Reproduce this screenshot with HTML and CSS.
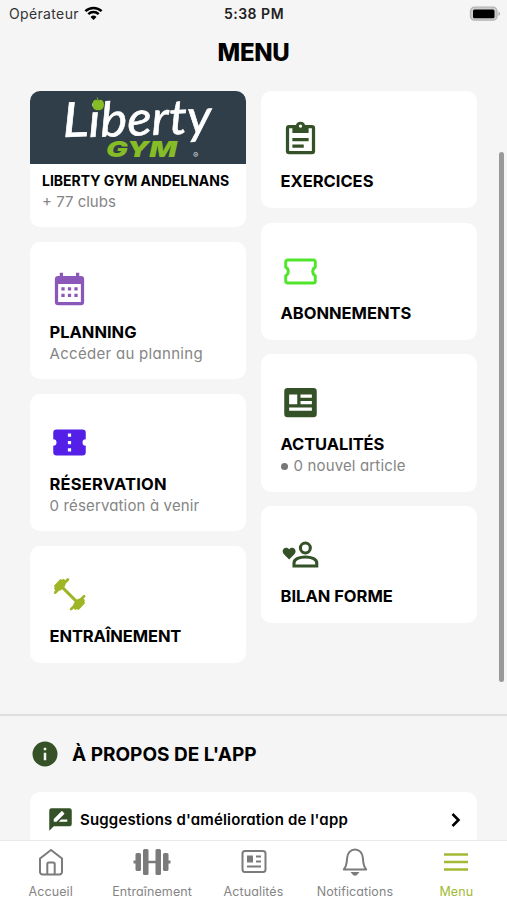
FILE: index.html
```html
<!DOCTYPE html>
<html lang="fr">
<head>
<meta charset="utf-8">
<title>Menu</title>
<link rel="stylesheet" href="styles.css">
</head>
<body>
<div class="app">
  <header class="status">
    <div class="carrier"><span>Opérateur</span>
      <svg width="19" height="15" viewBox="0 0 19 15"><path d="M1.4 5.2a11.6 11.6 0 0 1 16.2 0M4.3 8.2a7.4 7.4 0 0 1 10.4 0" fill="none" stroke="#000" stroke-width="2.5"/><path d="M9.5 14 6.5 11a4.3 4.3 0 0 1 6 0z"/></svg>
    </div>
    <div class="clock">5:38 PM</div>
    <div class="power"><svg width="32" height="16" viewBox="0 0 32 16"><rect x="1.500" y="1.200" width="26.500" height="13" rx="4" fill="#ccc" stroke="#b4b4b4" stroke-width="1.300"/><rect x="4" y="3.400" width="21.500" height="8.800" rx="1.500"/><path d="M29.500 5.500q3 2 0 4.500z" fill="#aaa"/></svg></div>
  </header>
  <h1 class="page-title">MENU</h1>
  <main class="content">
    <div class="columns">
      <div class="column">
        <section class="card club">
          <div class="banner">
            <svg width="216" height="73" viewBox="0 0 216 73">
              <g class="logo-script" transform="rotate(-2 33 46)">
                <text x="33" y="46" textLength="26" lengthAdjust="spacingAndGlyphs">L</text>
                <text x="59" y="47" textLength="123" lengthAdjust="spacingAndGlyphs">iberty</text>
              </g>
              <text class="logo-gym" x="76" y="66" textLength="71" lengthAdjust="spacingAndGlyphs">GYM</text>
              <path d="M68 9.500c-4-2-5.500 1-5.500 4 0 4 3 6.500 5.500 5.500 3 1 6-1.500 6-5.500 0-3-2-6-6-4z" fill="#86bc25"/><path d="M68 10q0-2-1-3.500" stroke="#86bc25" fill="none"/>
              <text class="logo-mark" x="163" y="67">®</text>
            </svg>
          </div>
          <h2 class="club-name">LIBERTY GYM ANDELNANS</h2>
          <p class="sub">+ 77 clubs</p>
        </section>
        <section class="card tile tall">
          <svg class="icon purple" viewBox="0 0 24 24"><path fill-rule="evenodd" d="M19 3h-1V1h-2v2H8V1H6v2H5a2 2 0 0 0-2 2v14a2 2 0 0 0 2 2h14a2 2 0 0 0 2-2V5a2 2 0 0 0-2-2zm0 16H5V8h14z"/><path d="M7 10h2v2H7zm4 0h2v2h-2zm4 0h2v2h-2zM7 14h2v2H7zm4 0h2v2h-2zm4 0h2v2h-2z"/></svg>
          <h2>PLANNING</h2>
          <p class="sub wide">Accéder au planning</p>
        </section>
        <section class="card tile tall">
          <svg class="icon indigo" viewBox="0 0 24 24"><path d="M22 10V6a2 2 0 0 0-2-2H4a2 2 0 0 0-2 2v4a2 2 0 0 1 0 4v4a2 2 0 0 0 2 2h16a2 2 0 0 0 2-2v-4a2 2 0 0 1 0-4zm-9 7.500h-2v-2h2zm0-4.500h-2v-2h2zm0-4.500h-2v-2h2z"/></svg>
          <h2 class="open">RÉSERVATION</h2>
          <p class="sub">0 réservation à venir</p>
        </section>
        <section class="card tile">
          <svg class="icon lime" viewBox="0 0 24 24"><g fill="none" stroke="#9fb526" stroke-linecap="round"><path d="M7 7l10 10" stroke-width="1.900"/><path d="M3.200 10.800l7.800-8M13 21l8-8" stroke-width="1.700"/><path d="M4 8.200l4.200-4.200M15.800 20l4.200-4.200" stroke-width="2.800"/><path d="M3.300 6.800l3.300-3.500M17.400 20.700l3.300-3.500" stroke-width="1.500"/><path d="M6 8l2-2M16 18l2-2" stroke-width="3"/></g></svg>
          <h2 class="tight">ENTRAÎNEMENT</h2>
        </section>
      </div>
      <div class="column">
        <section class="card tile">
          <svg class="icon green" viewBox="0 0 24 24"><path fill-rule="evenodd" d="M7 15h7v2H7zm0-4h10v2H7zM19 3h-4.180a3 3 0 0 0-5.640 0H5a2 2 0 0 0-2 2v14a2 2 0 0 0 2 2h14a2 2 0 0 0 2-2V5a2 2 0 0 0-2-2zm-7-.250a1 1 0 1 1 0 2 1 1 0 0 1 0-2zM19 19H5V5h2v3h10V5h2z"/></svg>
          <h2>EXERCICES</h2>
        </section>
        <section class="card tile">
          <svg class="icon" viewBox="0 0 24 24"><path fill="none" stroke="#50e52b" stroke-width="1.800" stroke-linejoin="round" d="M4 4.900h16a1.100 1.100 0 0 1 1.100 1.100v3.300a3.100 3.100 0 0 0 0 5.400V18a1.100 1.100 0 0 1-1.100 1.100H4A1.100 1.100 0 0 1 2.900 18v-3.300a3.100 3.100 0 0 0 0-5.400V6A1.100 1.100 0 0 1 4 4.900z"/></svg>
          <h2>ABONNEMENTS</h2>
        </section>
        <section class="card tile tall">
          <svg class="icon green" viewBox="0 0 24 24"><path fill-rule="evenodd" d="M20 3H4a2 2 0 0 0-2 2v14a2 2 0 0 0 2 2h16a2 2 0 0 0 2-2V5a2 2 0 0 0-2-2zM5 7h5v6H5zm14 10H5v-2h14zm0-4h-7v-2h7zm0-4h-7V7h7z"/></svg>
          <h2 class="tight">ACTUALITÉS</h2>
          <p class="sub"><i class="dot"></i>0 nouvel article</p>
        </section>
        <section class="card tile">
          <svg class="icon green" viewBox="0 0 24 24"><path d="M5 16.800 1.800 13.600C-.2 11.400 2 8.700 4.300 9.900l.7.600.7-.6c2.300-1.200 4.500 1.500 2.500 3.700z" transform="translate(0 -1.700)"/><g fill="none" stroke="#355128" stroke-width="1.900"><circle cx="15" cy="8" r="3.050"/><path d="M8 19.050v-1.800c0-5 14-5 14 0v1.800z"/></g></svg>
          <h2>BILAN FORME</h2>
        </section>
      </div>
    </div>
    <section class="about">
      <div class="about-head">
        <svg width="30" height="30" viewBox="0 0 24 24" fill="#355128"><path fill-rule="evenodd" d="M12 2a10 10 0 1 0 0 20 10 10 0 0 0 0-20zm1 15h-2v-6h2zm0-8h-2V7h2z"/></svg>
        <h2>À PROPOS DE L'APP</h2>
      </div>
      <div class="row">
        <svg width="27" height="27" viewBox="0 0 24 24"><path fill="#355128" d="M20 2H4a2 2 0 0 0-2 2v18l4-4h14a2 2 0 0 0 2-2V4a2 2 0 0 0-2-2z"/><path fill="#fff" d="M6 14v-2.470l6.880-6.880a.5.500 0 0 1 .7 0l1.770 1.770a.5.500 0 0 1 0 .7L8.470 14zM18 14h-7.500l2-2H18z"/></svg>
        <span class="row-label">Suggestions d'amélioration de l'app</span>
        <svg class="chevron" width="12" height="18" viewBox="0 0 12 18"><path d="M2.500 3l6 6-6 6" fill="none" stroke="#000" stroke-width="2.600"/></svg>
      </div>
    </section>
    <i class="scroll-thumb"></i>
  </main>
  <nav class="tabs">
    <a class="tab"><svg width="32" height="32" viewBox="0 0 32 32"><path d="M5 12.500 16 4l11 8.500V26a2.500 2.500 0 0 1-2.500 2.500h-17A2.500 2.500 0 0 1 5 26zM12.300 28V18a1.500 1.500 0 0 1 1.500-1.500h4.400a1.500 1.500 0 0 1 1.500 1.500v10"/></svg><span>Accueil</span></a>
    <a class="tab"><svg width="40" height="32" viewBox="0 0 40 32"><g fill="#7b7b7b" stroke="none"><rect x="11" y="3" width="5.500" height="26" rx="1.500"/><rect x="23.500" y="3" width="5.500" height="26" rx="1.500"/><rect x="3.500" y="7" width="5.500" height="18" rx="1.500"/><rect x="31" y="7" width="5.500" height="18" rx="1.500"/><path d="M15 14.700h10v2.600H15zM1.500 14.500h4v3h-4zM34.500 14.500h4v3h-4z"/></g></svg><span>Entraînement</span></a>
    <a class="tab"><svg width="32" height="32" viewBox="0 0 32 32"><rect x="4.500" y="5" width="23" height="21" rx="2.500"/><path d="M9 20.500h14M18 10.500h5M18 15.500h5"/><path d="M9 9.500h6v7H9z" fill="#7b7b7b" stroke="none"/></svg><span>Actualités</span></a>
    <a class="tab"><svg width="32" height="32" viewBox="0 0 32 32"><path d="M4.800 23.500c3-3.500 3-7 3.300-11.500.3-5 3.500-8.500 7.900-8.500s7.600 3.500 7.900 8.500c.3 4.500.3 8 3.300 11.500z" stroke-linejoin="round"/><path d="M13.500 27q2.500 3.500 5 0z" fill="#7b7b7b"/></svg><span>Notifications</span></a>
    <a class="tab active"><svg width="32" height="32" viewBox="0 0 32 32"><path d="M4 8.500h24M4 16h24M4 23.500h24"/></svg><span>Menu</span></a>
  </nav>
</div>
</body>
</html>
```
FILE: styles.css
```css
* { box-sizing: border-box; margin: 0; padding: 0; }
body { font-family: Inter, "Liberation Sans", sans-serif; font-feature-settings: "cv11"; background: #f5f5f5; color: #000; }
svg { display: block; flex: none; }
.app { height: 900px; display: flex; flex-direction: column; overflow: hidden; }
.status { height: 27px; display: grid; grid-template-columns: 1fr auto 1fr; align-items: center; padding: 0 6px 0 9px; font-size: 14px; font-feature-settings: normal; flex: none; }
.carrier { display: flex; gap: 5px; align-items: center; color: #333; letter-spacing: .35px; }
.clock { font-weight: 600; color: #222; letter-spacing: .5px; position: relative; left: -1px; }
.power { display: flex; justify-content: flex-end; }
.page-title { height: 50px; line-height: 51px; text-align: center; font-size: 24px; font-weight: 800; letter-spacing: -.3px; flex: none; }
.content { flex: 1; min-height: 0; overflow: hidden; position: relative; padding-top: 14px; }
.columns { display: flex; gap: 15px; padding: 0 30px; height: 623px; align-items: flex-start; }
.column { flex: 1; display: flex; flex-direction: column; gap: 14.600px; }
.card { background: #fff; border-radius: 10px; }
.club { height: 136px; }
.banner { height: 73px; background: #2f3e49; border-radius: 10px 10px 0 0; }
.banner svg { overflow: visible; }
.logo-script { font: italic 400 48px Lato, sans-serif; fill: #fff; stroke: #fff; stroke-width: .6; }
.logo-gym { font: italic 900 22px Inter, sans-serif; fill: #86bc25; }
.logo-mark { font-size: 8px; fill: #ddd; }
.club-name { font-size: 14px; line-height: 20px; padding: 7px 0 0 12px; font-weight: 700; white-space: nowrap; }
.club .sub { padding: 1px 0 0 12px; letter-spacing: 0; }
.tile { height: 117px; padding: 29px 0 0 19.500px; }
.tile.tall { height: 137.500px; }
.icon { width: 39px; height: 39px; fill: #355128; }
.icon.purple { fill: #8b57b8; }
.icon.indigo { fill: #5420e8; }
.tile h2 { font-size: 16.500px; line-height: 24px; margin-top: 10px; font-weight: 700; }
.tile h2.tight { letter-spacing: -.1px; }
.tile h2.open { letter-spacing: .2px; }
.sub { font-size: 15px; line-height: 20px; color: #858585; white-space: nowrap; letter-spacing: .15px; }
.sub.wide { letter-spacing: .3px; }
.dot { display: inline-block; width: 7px; height: 7px; border-radius: 50%; background: #777; margin-right: 6px; vertical-align: 1px; }
.about { border-top: 2px solid #dedede; }
.about-head { display: flex; align-items: center; gap: 12px; padding-left: 30px; height: 76px; }
.about-head h2 { font-size: 19px; font-weight: 700; }
.row { margin: 0 30px; height: 80px; border-radius: 10px; background: #fff; display: flex; align-items: flex-start; padding: 14px 15px 0 17px; }
.row-label { font-size: 15px; line-height: 27px; font-weight: 600; letter-spacing: .17px; margin-left: 6px; flex: 1; white-space: nowrap; }
.chevron { margin-top: 5px; }
.scroll-thumb { position: absolute; left: 499px; top: 75px; width: 5px; height: 530px; border-radius: 3px; background: #999; }
.tabs { height: 60px; flex: none; background: #fff; border-top: 1px solid #e9e9e9; display: flex; }
.tab { flex: 1; display: flex; flex-direction: column; align-items: center; font-size: 12.500px; line-height: 16px; letter-spacing: .1px; color: #858585; padding-top: 5px; }
.tab svg { margin-bottom: 6px; fill: none; stroke: #7b7b7b; stroke-width: 2; }
.tab.active { color: #a2ba36; }
.tab.active svg { stroke: #a2ba36; stroke-width: 2.500; }
```
